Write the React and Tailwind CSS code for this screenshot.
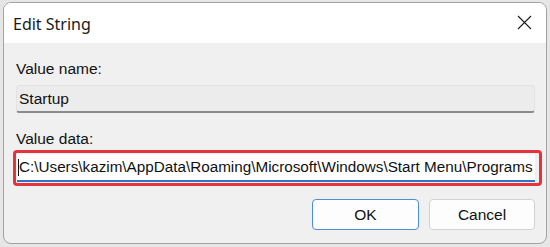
export default function App() {
  return (
    <div className="w-[550px] h-[247px] bg-[#e6e6e6] pl-[3px] pt-[2px] overflow-hidden" style={{ fontFamily: '"Liberation Sans", Arial, sans-serif' }}>
      <div className="w-[544px] h-[242px] border border-[#a3a3a3] rounded-[8px] overflow-hidden bg-[#f0f0f0] flex flex-col">
        <div className="h-[40px] bg-white flex items-center justify-between pl-[9px] pr-[14px] shrink-0">
          <span className="text-[16px] text-[#1a1a1a] pt-[1px]" style={{ fontFamily: '"Noto Sans", sans-serif' }}>Edit String</span>
          <svg width="15" height="15" viewBox="0 0 15 15" className="mt-[-1px]">
            <path d="M1 1 L14 14 M14 1 L1 14" stroke="#1a1a1a" strokeWidth="1.1" fill="none" />
          </svg>
        </div>
        <div className="flex flex-col pl-[12px] pr-[11px] pt-[17px]">
          <div className="text-[15.5px] leading-[17px] text-[#111]">Value name:</div>
          <div className="mt-[8px] w-[519px] h-[28px] bg-[#ececec] border border-[#e2e2e2] border-b-[2px] border-b-[#8c8c8c] rounded-[3px] flex items-center pl-[2px] text-[15.5px] text-[#111]">Startup</div>
          <div className="mt-[17px] text-[15.5px] leading-[17px] text-[#111]">Value data:</div>
          <div className="mt-[3px] ml-[-3px] w-[529px] h-[36px] border-[3px] border-[#e5333b] rounded-[4px] pl-[1px] pr-[4px] py-[1px] flex">
            <div className="flex-1 bg-white border-b-[2px] border-b-[#2f74c8] flex items-center pl-[1px] text-[15.25px] text-[#111] whitespace-nowrap overflow-hidden">
              <span className="w-[1px] h-[17px] bg-[#111]"></span>C:\Users\kazim\AppData\Roaming\Microsoft\Windows\Start Menu\Programs
            </div>
          </div>
          <div className="mt-[13px] flex justify-end gap-[10px]">
            <div className="w-[107px] h-[31px] bg-[#fdfdfd] border border-[#4d8fd6] rounded-[4px] flex items-center justify-center text-[15.5px] text-[#111]">OK</div>
            <div className="w-[106px] h-[31px] bg-[#fdfdfd] border border-[#d2d2d2] rounded-[4px] flex items-center justify-center text-[15.5px] text-[#111]">Cancel</div>
          </div>
        </div>
      </div>
    </div>
  );
}
